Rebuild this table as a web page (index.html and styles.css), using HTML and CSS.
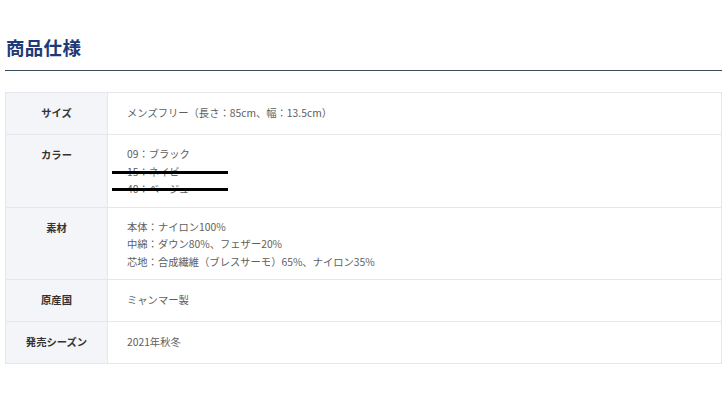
FILE: index.html
```html
<!DOCTYPE html>
<html lang="ja">
<head>
<meta charset="utf-8">
<link rel="stylesheet" href="styles.css">
</head>
<body>
<div class="spec">
  <h2 class="spec-title">商品仕様</h2>
  <table class="spec-table">
    <tr>
      <th>サイズ</th>
      <td>メンズフリー（長さ：85cm、幅：13.5cm）</td>
    </tr>
    <tr>
      <th>カラー</th>
      <td>
        <div class="line">09：ブラック</div>
        <div class="line redacted">15：ネイビー</div>
        <div class="line redacted">40：ベージュ</div>
      </td>
    </tr>
    <tr>
      <th>素材</th>
      <td>
        <div class="line">本体：ナイロン100%</div>
        <div class="line">中綿：ダウン80%、フェザー20%</div>
        <div class="line">芯地：合成繊維（ブレスサーモ）65%、ナイロン35%</div>
      </td>
    </tr>
    <tr>
      <th>原産国</th>
      <td>ミャンマー製</td>
    </tr>
    <tr>
      <th>発売シーズン</th>
      <td>2021年秋冬</td>
    </tr>
  </table>
</div>
</body>
</html>
```
FILE: styles.css
```css
html, body {
  margin: 0;
  padding: 0;
  background: #ffffff;
}
body {
  font-family: "Noto Sans CJK JP", "Noto Sans", sans-serif;
  color: #555;
}
.spec {
  width: 717px;
  margin-left: 5px;
  padding-top: 34px;
}
.spec-title {
  margin: 0;
  font-size: 18.5px;
  line-height: 26px;
  font-weight: 700;
  color: #1d3a78;
  padding-left: 1px;
  padding-bottom: 10px;
  border-bottom: 1px solid #3a4c5e;
  letter-spacing: 0.3px;
}
.spec-table {
  margin-top: 21px;
  width: 100%;
  border-collapse: collapse;
  font-size: 10.3px;
}
.spec-table th,
.spec-table td {
  border: 1px solid #e3e6ea;
  padding: 10px 0;
  vertical-align: top;
  line-height: 20px;
}
.spec-table th {
  width: 101px;
  padding-bottom: 11px;
  background: #f3f5f8;
  color: #333;
  font-weight: 700;
  text-align: center;
}
.spec-table td {
  padding-left: 19px;
  padding-top: 10px;
  padding-bottom: 9px;
  text-align: left;
  color: #5e5e5e;
}
.line {
  line-height: 17.5px;
}
.redacted {
  position: relative;
}
.redacted::after {
  content: "";
  position: absolute;
  left: -15px;
  top: 8px;
  width: 116px;
  height: 3px;
  background: #000;
}
```
